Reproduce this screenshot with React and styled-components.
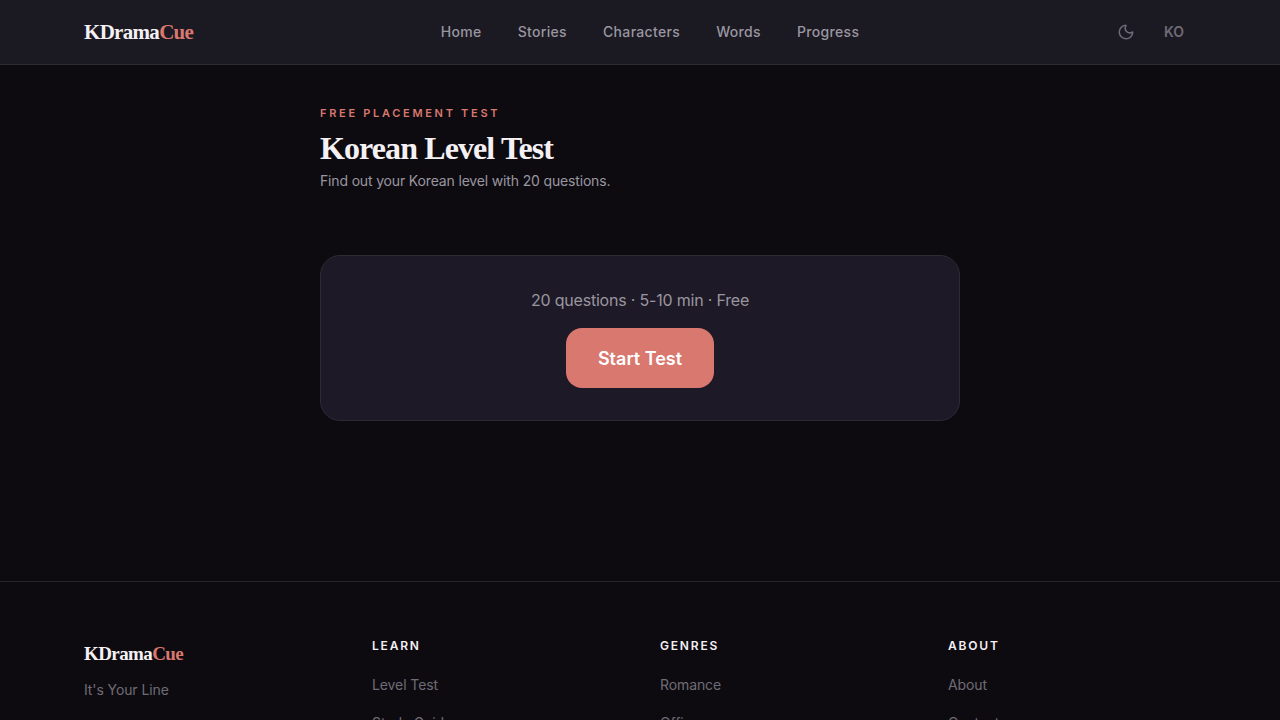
import React from "react";
import styled, { createGlobalStyle } from "styled-components";
import { Moon } from "lucide-react";

const Global = createGlobalStyle`
  * { box-sizing: border-box; }
  html, body { margin: 0; padding: 0; height: 100%; overflow: hidden; }
  body { background: #0d0b10; font-family: Inter, "Liberation Sans", sans-serif; }
  a { text-decoration: none; color: inherit; }
`;

const Header = styled.header`
  height: 65px;
  background: #1b1922;
  border-bottom: 1px solid #2c2a33;
  padding: 0 84px;
  display: flex;
  justify-content: space-between;
  align-items: center;
`;

const Logo = styled.a`
  font-family: "Liberation Serif", serif;
  font-weight: 700;
  font-size: ${(p) => p.$size}px;
  letter-spacing: ${(p) => p.$tracking}px;
  color: #f4f0f4;
  span { color: #d9786f; }
`;

const Nav = styled.nav`
  display: flex;
  gap: 36px;
  font-size: 14px;
  line-height: 18px;
  font-weight: 500;
  letter-spacing: 0.33px;
  color: #9a96a0;
  margin: 0 0 1px 2px;
`;

const Tools = styled.div`
  display: flex;
  align-items: center;
  gap: 5px;
`;

const ToolButton = styled.button`
  padding: 8px 12px;
  border: 0;
  background: none;
  display: flex;
  align-items: center;
  color: #6f6b76;
  font-family: inherit;
  font-size: 14px;
  font-weight: 600;
`;

const LangButton = styled(ToolButton)`
  margin-bottom: 2px;
`;

const Main = styled.main`
  width: 640px;
  margin: 0 auto;
  height: 516px;
  padding-top: 41px;
`;

const Eyebrow = styled.div`
  font-size: 11px;
  line-height: 14px;
  font-weight: 600;
  letter-spacing: 2.7px;
  color: #d9786f;
`;

const Title = styled.h1`
  margin: 8px 0 0;
  font-family: "Liberation Serif", serif;
  font-weight: 700;
  font-size: 32px;
  line-height: 40px;
  letter-spacing: -0.9px;
  color: #f4f0f4;
`;

const Sub = styled.p`
  margin: 3px 0 0;
  font-size: 14px;
  line-height: 20px;
  letter-spacing: -0.16px;
  color: #9a96a0;
`;

const Card = styled.section`
  margin-top: 64px;
  height: 166px;
  background: #1e1926;
  border: 1px solid #2c2a33;
  border-radius: 20px;
  padding-top: 32px;
  display: flex;
  flex-direction: column;
  align-items: center;
`;

const Meta = styled.div`
  font-size: 16px;
  line-height: 24px;
  letter-spacing: -0.2px;
  color: #9a96a0;
`;

const StartButton = styled.button`
  margin-top: 16px;
  width: 148px;
  height: 60px;
  border: 0;
  border-radius: 16px;
  background: #d9786f;
  color: #fff;
  font-family: inherit;
  font-size: 18px;
  font-weight: 600;
`;

const Footer = styled.footer`
  border-top: 1px solid #25232b;
  padding: 56px 84px 0;
  display: grid;
  grid-template-columns: repeat(4, 288px);
`;

const Brand = styled.div`
  padding-top: 5px;
`;

const Tagline = styled.p`
  margin: 15px 0 0;
  font-size: 14px;
  line-height: 20px;
  letter-spacing: -0.1px;
  color: #6f6b76;
`;

const ColTitle = styled.h4`
  margin: 0 0 20px;
  font-size: 12px;
  line-height: 16px;
  font-weight: 600;
  letter-spacing: 1.8px;
  color: #f4f0f4;
`;

const FootLink = styled.a`
  display: block;
  font-size: 14px;
  line-height: 22px;
  margin-bottom: 16px;
  letter-spacing: -0.1px;
  color: #6f6b76;
`;

const columns = [
  { title: "LEARN", links: ["Level Test", "Study Guide"] },
  { title: "GENRES", links: ["Romance", "Office"] },
  { title: "ABOUT", links: ["About", "Contact"] },
];

export default function App() {
  return (
    <>
      <Global />
      <Header>
        <Logo $size={21} $tracking={-0.7}>KDrama<span>Cue</span></Logo>
        <Nav>
          {["Home", "Stories", "Characters", "Words", "Progress"].map((n) => (
            <a key={n}>{n}</a>
          ))}
        </Nav>
        <Tools>
          <ToolButton><Moon size={18} strokeWidth={2} /></ToolButton>
          <LangButton>KO</LangButton>
        </Tools>
      </Header>
      <Main>
        <Eyebrow>FREE PLACEMENT TEST</Eyebrow>
        <Title>Korean Level Test</Title>
        <Sub>Find out your Korean level with 20 questions.</Sub>
        <Card>
          <Meta>20 questions · 5-10 min · Free</Meta>
          <StartButton>Start Test</StartButton>
        </Card>
      </Main>
      <Footer>
        <Brand>
          <Logo $size={19} $tracking={-0.6}>KDrama<span>Cue</span></Logo>
          <Tagline>It's Your Line</Tagline>
        </Brand>
        {columns.map((c) => (
          <div key={c.title}>
            <ColTitle>{c.title}</ColTitle>
            {c.links.map((l) => (
              <FootLink key={l}>{l}</FootLink>
            ))}
          </div>
        ))}
      </Footer>
    </>
  );
}
